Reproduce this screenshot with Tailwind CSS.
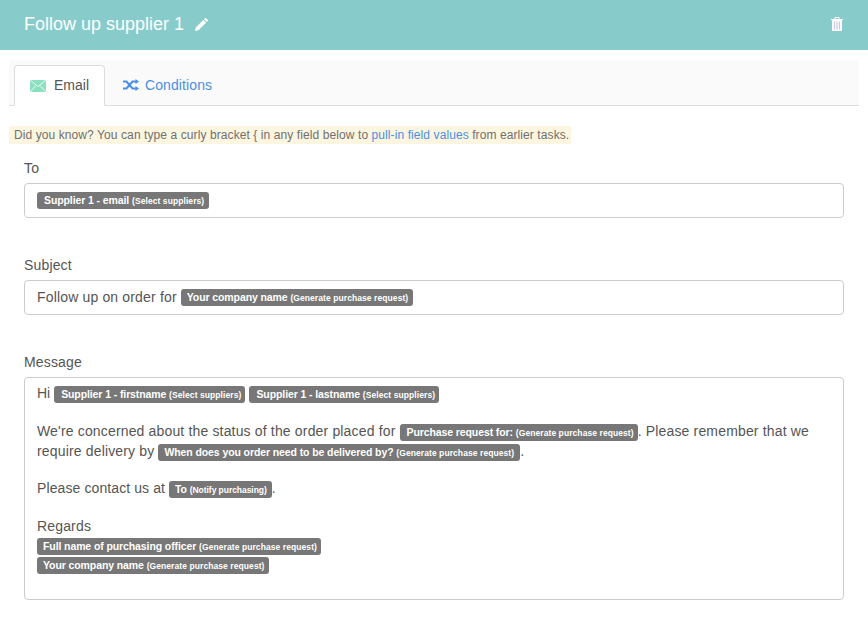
<!DOCTYPE html>
<html>
<head>
    <title>Follow up supplier 1</title>
    <meta charset="UTF-8">
    <script src="https://cdn.jsdelivr.net/npm/@tailwindcss/browser@4"></script>
</head>
<body class="bg-white font-['Liberation_Sans',Arial,sans-serif] text-[14px] text-[#555] overflow-hidden">
    <div class="h-[50px] bg-[#87cccb] flex items-center justify-between pl-6 pr-[25px] text-white">
        <div class="flex items-center gap-[11px]">
            <span class="text-[18px] leading-[24px] pb-[3px]">Follow up supplier 1</span>
            <svg class="w-[13px] h-[13px] mb-[2px]" viewBox="0 0 14 14" fill="#fff"><path d="M0 14l.8-3.700L9 2.100l2.900 2.900-8.200 8.200L0 14zM9.800 1.300L10.900.2c.3-.3.7-.3 1 0l1.900 1.900c.3.3.3.7 0 1l-1.100 1.100-2.900-2.900z"/></svg>
        </div>
        <svg class="w-[12px] h-[14px] mb-[2px]" viewBox="0 0 12 14"><path d="M0 2.500h12M4 2.500V.5h4v2" fill="none" stroke="#fff"/><rect x="1" y="3" width="10" height="11" fill="#fff"/><path d="M3.500 4.500v8M6 4.500v8M8.500 4.500v8" stroke="#c5c8e8" stroke-width="1.200"/></svg>
    </div>

    <div class="mt-[10px] ml-[9px] mr-[9px] h-[46px] bg-[#fafafa] border-b border-[#ddd] flex items-end pl-[5px]">
        <div class="w-[91px] h-[41px] -mb-px bg-white border border-[#ddd] border-b-white rounded-t-[4px] flex items-center pl-[15px] gap-[8px]">
            <svg class="w-[16px] h-[12px]" viewBox="0 0 16 12"><rect width="16" height="12" fill="#8be0c0"/><path d="M0 0l8 6.500L16 0M0 12l6-6.500M16 12l-6-6.500" fill="none" stroke="#fff" stroke-width="0.800"/></svg>
            <span>Email</span>
        </div>
        <div class="h-[41px] flex items-center pl-[18px] gap-[6px] text-[#4a8fe7] tracking-[0.1px]">
            <svg class="w-[16px] h-[12px]" viewBox="0 0 16 12" fill="none" stroke="#4a8fe7" stroke-width="2"><path d="M0 2.500h3.500L9.500 9.500H13M0 9.500h3.500L9.500 2.500H13"/><path d="M12.500 0L16 2.500 12.500 5zM12.500 7L16 9.500 12.500 12z" fill="#4a8fe7" stroke="none"/></svg>
            <span class="pt-[1px]">Conditions</span>
        </div>
    </div>

    <div class="mt-[20px] ml-[9px] w-[562px] h-[18px] bg-[#fcf6e1] pl-[5px] text-[12px] leading-[18px] text-[#707070] tracking-[0.09px]">Did you know? You can type a curly bracket { in any field below to <span class="text-[#4a8fe7]">pull-in field values</span> from earlier tasks.</div>

    <div class="px-6 tracking-[0.16px]">
        <div class="mt-[15px] h-[24px] leading-[18px]">To</div>
        <div class="h-[35px] border border-[#ccc] rounded-[4px] pl-3 leading-[32px]">
            <span class="bg-[#777] text-white rounded-[3px] font-bold text-[10.500px] leading-none tracking-[-0.1px] pt-[2px] pb-[3px] pl-[7px] pr-[5px] align-[1px]">Supplier 1 - email <span class="text-[8.500px] tracking-[0.08px]">(Select suppliers)</span></span>
        </div>

        <div class="mt-[38px] h-[24px] leading-[18px]">Subject</div>
        <div class="h-[35px] border border-[#ccc] rounded-[4px] pl-3 leading-[32px]">
            Follow up on order for <span class="bg-[#777] text-white rounded-[3px] font-bold text-[10.500px] leading-none tracking-[-0.1px] pt-[2px] pb-[3px] pl-[6px] pr-[5px] align-[1px]">Your company name <span class="text-[8.500px] tracking-[0.08px]">(Generate purchase request)</span></span>
        </div>

        <div class="mt-[38px] h-[24px] leading-[18px]">Message</div>
        <div class="h-[223px] border border-[#ccc] rounded-[4px] pl-3 pr-3 pt-[6px] leading-[19px]">
            <div><span class="tracking-normal">Hi </span><span class="bg-[#777] text-white rounded-[3px] font-bold text-[10.500px] leading-none tracking-[-0.1px] pt-[2px] pb-[3px] pl-[7px] pr-[4px]">Supplier 1 - firstname <span class="text-[8.500px] tracking-[0.08px]">(Select suppliers)</span></span> <span class="bg-[#777] text-white rounded-[3px] font-bold text-[10.500px] leading-none tracking-[-0.1px] pt-[2px] pb-[3px] pl-[7px] pr-[4px]">Supplier 1 - lastname <span class="text-[8.500px] tracking-[0.08px]">(Select suppliers)</span></span></div>
            <div class="mt-[18px] leading-[20px]">We're concerned about the status of the order placed for <span class="bg-[#777] text-white rounded-[3px] font-bold text-[10.500px] leading-none tracking-[-0.1px] pt-[2px] pb-[3px] pl-[7px] pr-[4px]">Purchase request for: <span class="text-[8.500px] tracking-[0.08px]">(Generate purchase request)</span></span>. Please remember that we require delivery by <span class="bg-[#777] text-white rounded-[3px] font-bold text-[10.500px] leading-none tracking-[-0.1px] pt-[2px] pb-[3px] px-[6px]">When does you order need to be delivered by? <span class="text-[8.500px] tracking-[0.08px]">(Generate purchase request)</span></span>.</div>
            <div class="mt-[18px] tracking-[0.1px]">Please contact us at <span class="bg-[#777] text-white rounded-[3px] font-bold text-[10.500px] leading-none tracking-[-0.1px] pt-[2px] pb-[3px] pl-[6px] pr-[5px]">To <span class="text-[8.500px] tracking-[-0.05px]">(Notify purchasing)</span></span>.</div>
            <div class="mt-[18px] leading-[20px]">Regards</div>
            <div class="leading-[19px]"><span class="bg-[#777] text-white rounded-[3px] font-bold text-[10.500px] leading-none tracking-[-0.1px] pt-[2px] pb-[3px] pl-[6px] pr-[4px]">Full name of purchasing officer <span class="text-[8.500px] tracking-[0.08px]">(Generate purchase request)</span></span></div>
            <div class="leading-[19px]"><span class="bg-[#777] text-white rounded-[3px] font-bold text-[10.500px] leading-none tracking-[-0.1px] pt-[2px] pb-[3px] pl-[6px] pr-[4px]">Your company name <span class="text-[8.500px] tracking-[0.08px]">(Generate purchase request)</span></span></div>
        </div>
    </div>
</body>
</html>
